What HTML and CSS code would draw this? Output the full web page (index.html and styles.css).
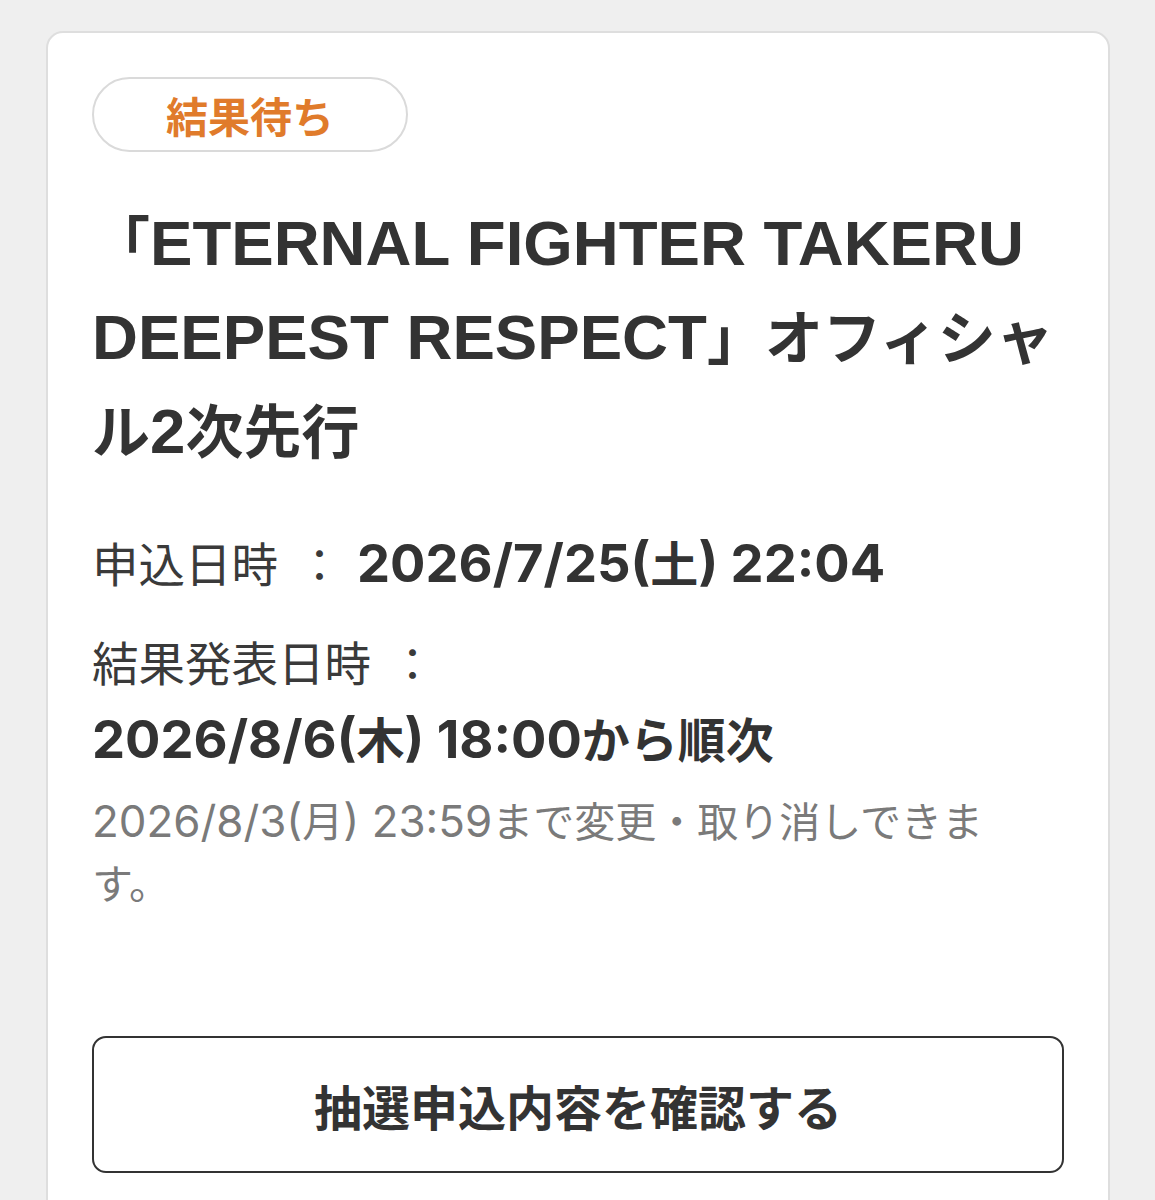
FILE: index.html
```html
<!DOCTYPE html>
<html lang="ja">
<head>
<meta charset="utf-8">
<title>抽選申込</title>
<link rel="stylesheet" href="styles.css">
</head>
<body>
<main class="page">
  <section class="card">
    <div class="badge">結果待ち</div>
    <h1 class="title">「<span class="latin" lang="en">ETERNAL FIGHTER TAKERU DEEPEST RESPECT</span>」オフィシャル<span class="latin">2</span>次先行</h1>
    <div class="row row-apply">
      <span class="label">申込日時</span><span class="colon">：</span><span class="value"><span class="num">2026/7/25(</span>土<span class="num">) 22:04</span></span>
    </div>
    <div class="row row-result">
      <span class="label">結果発表日時</span><span class="colon">：</span>
    </div>
    <div class="value value-block"><span class="num">2026/8/6(</span>木<span class="num">) 18:00</span>から順次</div>
    <p class="note"><span class="num">2026/8/3(</span>月<span class="num">) 23:59</span>まで変更・取り消しできます。</p>
    <button class="confirm" type="button">抽選申込内容を確認する</button>
  </section>
</main>
</body>
</html>
```
FILE: styles.css
```css
html, body {
  margin: 0;
  padding: 0;
  background: #efefef;
}

body {
  font-family: "Noto Sans CJK JP", sans-serif;
  color: #333333;
}

.page {
  padding: 31px 45px 0 46px;
}

.card {
  background: #ffffff;
  border: 2px solid #dedede;
  border-radius: 17px;
  padding: 44px 44px 80px;
}

.badge {
  width: 312px;
  height: 71px;
  border: 2px solid #dadada;
  border-radius: 40px;
  display: flex;
  align-items: center;
  justify-content: center;
  font-size: 42px;
  font-weight: 700;
  color: #e07b2b;
}

.title {
  margin: 41px 0 0;
  font-size: 58px;
  line-height: 94px;
  font-weight: 700;
  color: #333333;
}

.latin {
  font-family: "Liberation Sans", Arial, sans-serif;
  font-size: 63.6px;
  line-height: 1;
}

.num {
  font-family: Inter, "Liberation Sans", sans-serif;
  line-height: 1;
}

.row {
  display: flex;
  align-items: baseline;
}

.row-apply {
  margin-top: 51px;
}

.row-result {
  margin-top: 31px;
}

.label {
  font-size: 46.5px;
  line-height: 67px;
  font-weight: 400;
  color: #3a3a3a;
}

.colon {
  font-size: 45px;
  line-height: 67px;
  color: #3a3a3a;
  margin: 0 15px 0 19px;
}

.value {
  font-size: 48px;
  line-height: 70px;
  font-weight: 700;
  color: #333333;
}

.value .num {
  font-size: 52.5px;
}

.value-block {
  margin-top: 7px;
}

.note {
  margin: 16px 10px 0 0;
  font-size: 41px;
  line-height: 62px;
  color: #7a7a7a;
}

.note .num {
  font-size: 43.9px;
}

.confirm {
  display: flex;
  align-items: center;
  justify-content: center;
  width: 100%;
  height: 137px;
  margin-top: 124px;
  background: #ffffff;
  border: 2px solid #333333;
  border-radius: 14px;
  font-family: "Noto Sans CJK JP", sans-serif;
  font-size: 48px;
  font-weight: 700;
  color: #333333;
  padding: 0;
}
```
